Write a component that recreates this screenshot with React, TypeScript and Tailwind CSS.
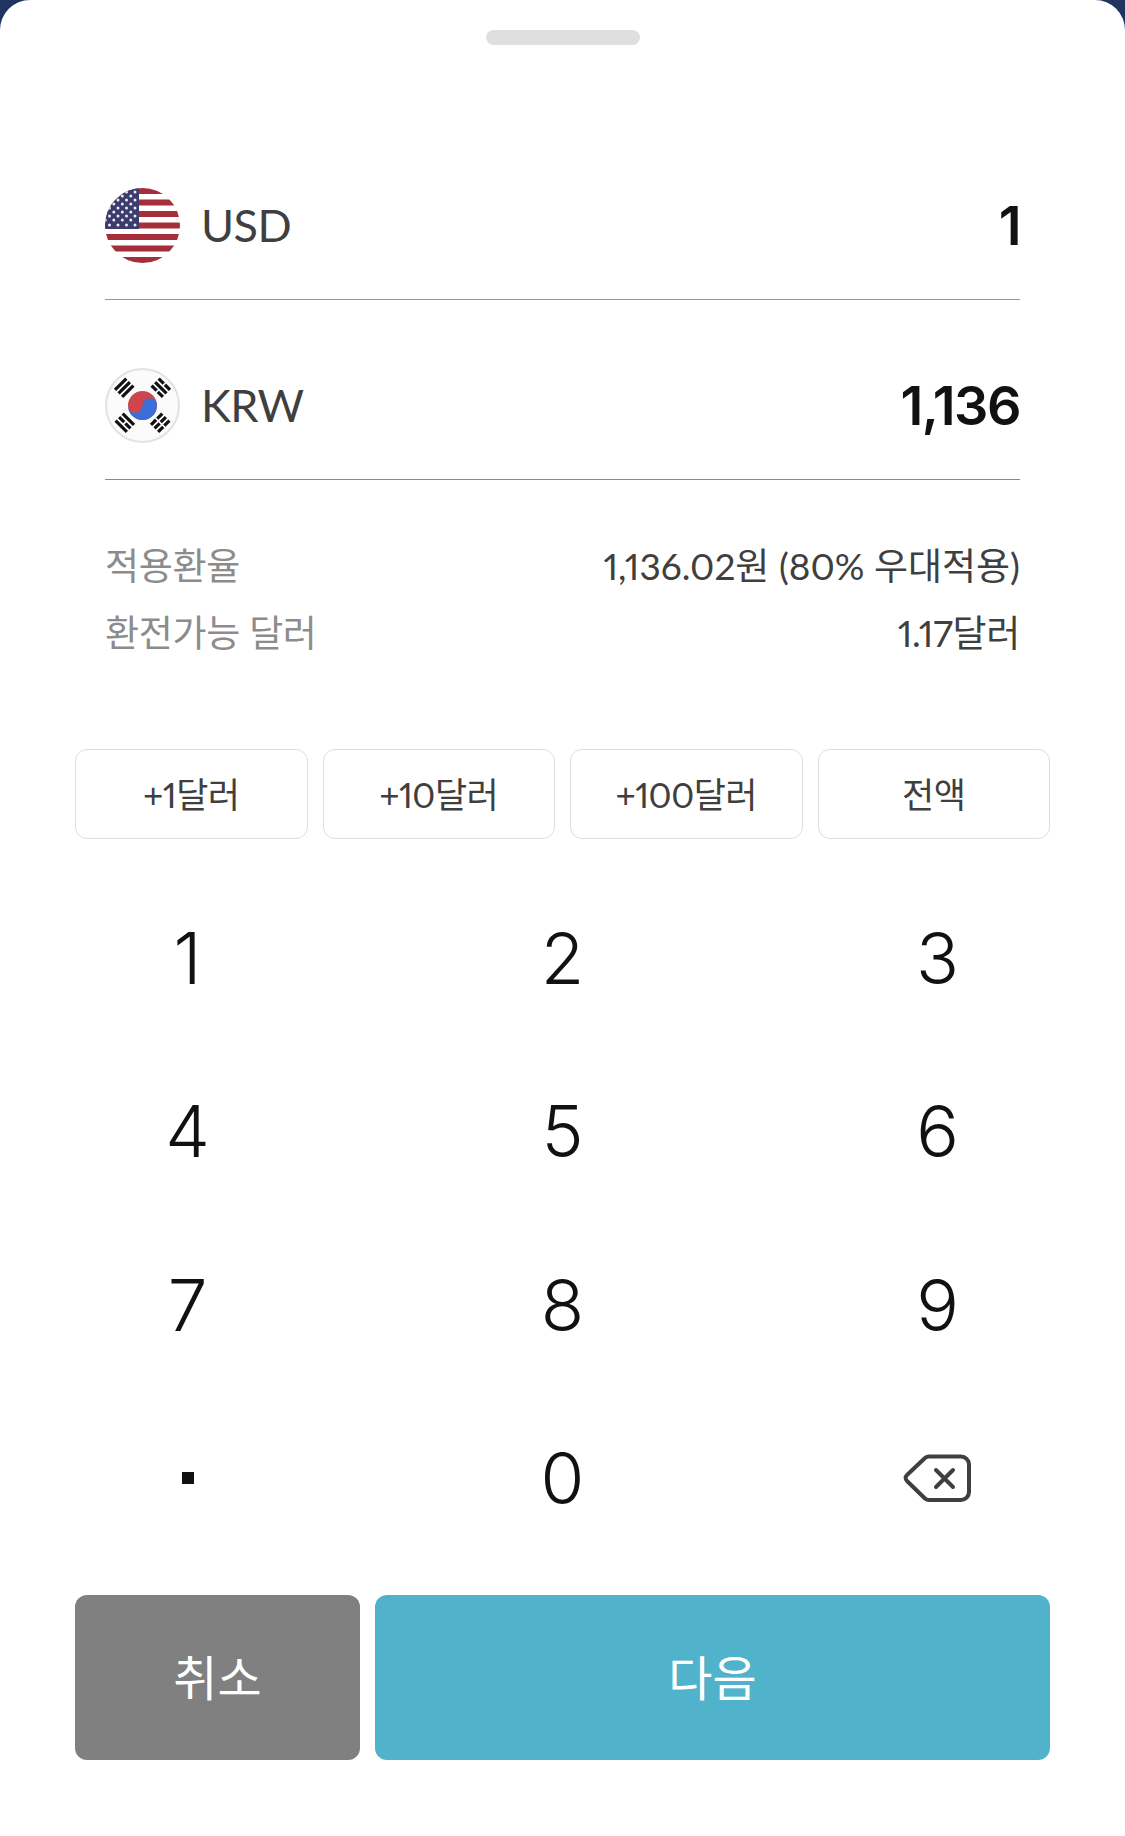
import React from 'react';

const font = { fontFamily: 'Lato, "Noto Sans CJK KR", sans-serif' };
const digitFont = { fontFamily: 'Inter, sans-serif' };

const UsFlag = () => (
  <svg width="75" height="75" viewBox="0 0 75 75">
    <defs>
      <clipPath id="usClip">
        <circle cx="37.5" cy="37.5" r="37.5" />
      </clipPath>
    </defs>
    <g clipPath="url(#usClip)">
      <rect width="75" height="75" fill="#fff" />
      {[0, 11.5, 23, 34.5, 46, 57.5, 69].map((y) => (
        <rect key={y} x="0" y={y} width="75" height="6" fill="#a62d3a" />
      ))}
      <rect x="0" y="0" width="34" height="41" fill="#3c3b6e" />
      {[4, 8, 12, 16, 20, 24, 28, 32, 37].map((y, i) =>
        [4.5, 13, 21.5, 30].map((x) => (
          <circle key={`${x}-${y}`} cx={i % 2 ? x - 4.2 : x} cy={y} r="1.5" fill="#eceaf2" />
        ))
      )}
    </g>
  </svg>
);

// bars: for each of the three bars, whether it is split in the middle
const Trigram = ({ cx, cy, angle, bars }: { cx: number; cy: number; angle: number; bars: boolean[] }) => (
  <g transform={`rotate(${angle} ${cx} ${cy})`} fill="#111">
    {bars.map((split, i) => {
      const y = cy - 7 + i * 5;
      return split ? (
        <g key={i}>
          <rect x={cx - 8} y={y} width="7.2" height="3.2" />
          <rect x={cx + 0.8} y={y} width="7.2" height="3.2" />
        </g>
      ) : (
        <rect key={i} x={cx - 8} y={y} width="16" height="3.2" />
      );
    })}
  </g>
);

const KrFlag = () => (
  <svg width="75" height="75" viewBox="0 0 75 75">
    <circle cx="37.5" cy="37.5" r="36.5" fill="#fbfbfb" stroke="#e2e2e2" strokeWidth="2" />
    <Trigram cx={19.5} cy={20} angle={-45} bars={[false, false, false]} />
    <Trigram cx={55.5} cy={20} angle={45} bars={[true, false, true]} />
    <Trigram cx={19.5} cy={55} angle={45} bars={[false, true, false]} />
    <Trigram cx={55.5} cy={55} angle={-45} bars={[true, true, true]} />
    <circle cx="37.5" cy="37.5" r="14.5" fill="#d0454c" />
    <path d="M23 37.5 a14.5 14.5 0 0 0 29 0 a7.25 7.25 0 0 0 -14.5 0 a7.25 7.25 0 0 1 -14.5 0 Z" fill="#3a6fd8" />
  </svg>
);

const BackspaceIcon = () => (
  <svg width="70" height="50" viewBox="0 0 70 50" fill="none" stroke="#3f3f3f" strokeWidth="4" strokeLinecap="round" strokeLinejoin="round">
    <path d="M26 3.5 H58 a8 8 0 0 1 8 8 V39 a8 8 0 0 1 -8 8 H26 a6 6 0 0 1 -4 -1.5 L4 28 a4 4 0 0 1 0 -6 L22 5 a6 6 0 0 1 4 -1.5 Z" />
    <path d="M33 17 L50 34 M50 17 L33 34" />
  </svg>
);

const CurrencyRow = ({ flag, code, amount, line }: { flag: React.ReactNode; code: string; amount: string; line: string }) => (
  <div className={`flex h-[112px] items-start justify-between border-b ${line}`}>
    <div className="flex items-center gap-[21px]">
      {flag}
      <span className="text-[45px] leading-[73px] tracking-[-0.5px] text-[#3f3f3f]">{code}</span>
    </div>
    <span className="text-[54px] font-semibold leading-[75px] tracking-[-1.5px] text-[#111]" style={digitFont}>
      {amount}
    </span>
  </div>
);

const quick = ['+1달러', '+10달러', '+100달러', '전액'];
const keys = ['1', '2', '3', '4', '5', '6', '7', '8', '9', '.', '0'];

const App = () => {
  return (
    <div className="h-[1836px] w-[1125px] overflow-hidden bg-[#1f3560]" style={font}>
      <div className="flex h-full flex-col rounded-t-[30px] bg-white">
        {/* Handle */}
        <div className="mx-auto mt-[30px] h-[15px] w-[154px] rounded-full bg-[#dfdfdf]" />

        {/* Amounts */}
        <div className="mt-[143px] px-[105px]">
          <CurrencyRow flag={<UsFlag />} code="USD" amount="1" line="border-[#52b3cb]" />
          <div className="mt-[68px]">
            <CurrencyRow flag={<KrFlag />} code="KRW" amount="1,136" line="border-[#8a8a8a]" />
          </div>
        </div>

        {/* Rate info */}
        <div className="mt-[63px] flex flex-col gap-[22px] px-[105px] text-[37px] leading-[45px] proportional-nums">
          <div className="flex justify-between">
            <span className="tracking-[-0.3px] text-[#8c8c8c]">적용환율</span>
            <span className="text-[#3f3f3f]">1,136.02원 (80% 우대적용)</span>
          </div>
          <div className="flex justify-between">
            <span className="tracking-[-0.3px] text-[#8c8c8c]">환전가능 달러</span>
            <span className="tracking-[-0.3px] text-[#3f3f3f]">1.17달러</span>
          </div>
        </div>

        {/* Quick amounts */}
        <div className="mt-[94px] grid grid-cols-4 gap-[15px] px-[75px] proportional-nums">
          {quick.map((q) => (
            <button key={q} className="h-[90px] rounded-[12px] border border-[#dedede] text-[35px] tracking-[-0.5px] text-[#3f3f3f]">
              {q}
            </button>
          ))}
        </div>

        {/* Keypad */}
        <div className="mt-[32px] grid grid-cols-3 auto-rows-[173.5px]" style={digitFont}>
          {keys.map((k) => (
            <button key={k} className="flex items-center justify-center text-[71px] font-light text-[#111]">
              {k === '.' ? <span className="block h-[12px] w-[12px] bg-[#111]" /> : k}
            </button>
          ))}
          <button className="flex items-center justify-center" aria-label="지우기">
            <BackspaceIcon />
          </button>
        </div>

        {/* Actions */}
        <div className="mt-[30px] flex gap-[15px] px-[75px]">
          <button className="h-[165px] w-[285px] rounded-[12px] bg-[#808080] text-[48px] text-white">취소</button>
          <button className="h-[165px] flex-1 rounded-[12px] bg-[#50b3cb] text-[48px] text-white">다음</button>
        </div>
      </div>
    </div>
  );
};

export default App;
